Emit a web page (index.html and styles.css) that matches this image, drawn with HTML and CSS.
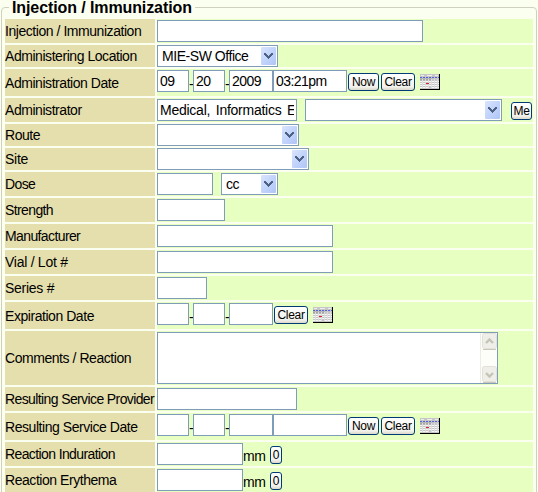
FILE: index.html
```html
<!DOCTYPE html>
<html lang="en">
<head>
<meta charset="utf-8">
<title>Injection / Immunization</title>
<link rel="stylesheet" href="styles.css">
</head>
<body>
<svg class="defs" aria-hidden="true">
  <defs>
    <linearGradient id="blue" x1="0" y1="0" x2="1" y2="1"><stop offset="0" stop-color="#d9e5fd"/><stop offset=".5" stop-color="#c2d4fb"/><stop offset="1" stop-color="#b0c5f6"/></linearGradient>
  </defs>
  <symbol id="drop" viewBox="0 0 15 18">
    <rect width="15" height="18" rx="1" fill="url(#blue)"/>
    <path d="M3 6h2v1h1v1h1v1h1V8h1V7h1V6h2v2h-1v1h-1v1H9v1H8v1H7v-1H6v-1H5V9H4V8H3z" fill="#4d6185"/>
  </symbol>
  <symbol id="cal" viewBox="0 0 20 16">
    <path d="M0 0h20v16H0z" fill="#c6c6c6"/>
    <path d="M1 1h3M7 1h5M15 1h3" stroke="#eee" transform="translate(0 .5)"/>
    <path d="M0 3.5h19" stroke="#5264d8" stroke-dasharray="2 1"/>
    <path d="M0 5.5h12" stroke="#a5a5a5" stroke-width="2"/>
    <path d="M0 7.5h19M0 9.5h19M0 11.5h19M0 13.5h8M12 13.5h7" stroke="#f7f7f7"/>
    <path d="M2.5 5v9M5.5 5v9M8.5 5v9M11.5 5v9M14.5 5v9M17.5 5v9" stroke="#dedede"/>
    <path d="M6 9h3v1H6z" fill="#e02020"/>
    <path d="M19 0h1v16H0v-1h19z" fill="#000"/>
  </symbol>
</svg>
<fieldset class="panel">
  <legend>Injection / Immunization</legend>
  <div class="rows">
    <div class="row"><label>Injection / Immunization</label><div class="val"><input class="w266"></div></div>
    <div class="row short"><label>Administering Location</label><div class="val"><span class="sel w121"><span>MIE-SW Office</span><svg><use href="#drop"/></svg></span></div></div>
    <div class="row date"><label>Administration Date</label><div class="val"><input class="w32" value="09"><i>-</i><input class="w32" value="20"><i>-</i><input class="w44" value="2009"><input class="w74" value="03:21pm"><button class="now">Now</button><button class="clear">Clear</button><svg class="cal"><use href="#cal"/></svg></div></div>
    <div class="row"><label>Administrator</label><div class="val"><input class="w140 name" value="Medical, Informatics Engineering"><span class="sel w197 gap"><svg><use href="#drop"/></svg></span><button class="me">Me</button></div></div>
    <div class="row short"><label>Route</label><div class="val"><span class="sel w142"><svg><use href="#drop"/></svg></span></div></div>
    <div class="row short"><label class="loose">Site</label><div class="val"><span class="sel w152"><svg><use href="#drop"/></svg></span></div></div>
    <div class="row"><label class="tight">Dose</label><div class="val"><input class="w56"><span class="sel w57 gap"><span>cc</span><svg><use href="#drop"/></svg></span></div></div>
    <div class="row"><label class="tight">Strength</label><div class="val"><input class="w68"></div></div>
    <div class="row"><label class="tight">Manufacturer</label><div class="val"><input class="w176"></div></div>
    <div class="row"><label class="loose">Vial / Lot #</label><div class="val"><input class="w176"></div></div>
    <div class="row"><label class="loose">Series #</label><div class="val"><input class="w50"></div></div>
    <div class="row date"><label>Expiration Date</label><div class="val"><input class="w32"><i>-</i><input class="w32"><i>-</i><input class="w44"><button class="clear first">Clear</button><svg class="cal"><use href="#cal"/></svg></div></div>
    <div class="row tall"><label>Comments / Reaction</label><div class="val"><div class="area"><div class="bar">
      <svg width="15" height="17"><rect x=".5" y=".5" width="14" height="15" rx="2" fill="#efeee8" stroke="#e2e1d8"/><path d="M1 16.5h13" stroke="#c9c8bb"/><path d="M4 10l3.5-3.5L11 10" fill="none" stroke="#c5c4b9" stroke-width="2.4"/></svg>
      <svg width="15" height="17"><rect x=".5" y=".5" width="14" height="15" rx="2" fill="#efeee8" stroke="#e2e1d8"/><path d="M1 16.5h13" stroke="#c9c8bb"/><path d="M4 7l3.5 3.5L11 7" fill="none" stroke="#c5c4b9" stroke-width="2.4"/></svg>
    </div></div></div></div>
    <div class="row"><label class="tight">Resulting Service Provider</label><div class="val"><input class="w140"></div></div>
    <div class="row date"><label>Resulting Service Date</label><div class="val"><input class="w32"><i>-</i><input class="w32"><i>-</i><input class="w44"><input class="w74"><button class="now">Now</button><button class="clear">Clear</button><svg class="cal"><use href="#cal"/></svg></div></div>
    <div class="row"><label class="tight">Reaction Induration</label><div class="val"><input class="w86"><b>mm</b><button class="zero">0</button></div></div>
    <div class="row"><label>Reaction Erythema</label><div class="val"><input class="w86"><b>mm</b><button class="zero">0</button></div></div>
  </div>
</fieldset>
</body>
</html>
```
FILE: styles.css
```css
* { box-sizing: border-box; }
html { overflow: hidden; }
body { margin: 0; height: 492px; overflow: hidden; background: #fbfff0; color: #000; font: 14px/16px "Liberation Sans", Arial, sans-serif; }
.defs { display: block; width: 0; height: 0; }
.panel { margin: 0 1px; padding: 0 3px; height: 510px; min-width: 0; border: 1px solid #d0d0bf; border-radius: 4px; }
legend { margin-left: 4px; padding: 0 3px; height: 14px; line-height: 16px; font-size: 16px; font-weight: bold; letter-spacing: -.1px; white-space: nowrap; }
.rows { display: flex; flex-direction: column; gap: 2px; padding-top: 5px; }
.row { display: grid; grid-template-columns: 150px 376px; column-gap: 2px; height: 24px; flex: none; }
.short { height: 22px; }
.date { height: 27px; }
.tall { height: 54px; }
label { display: flex; align-items: center; background: #e5dead; white-space: nowrap; letter-spacing: -.45px; }
.tight { letter-spacing: -.61px; }
.loose { letter-spacing: -.27px; }
.val { display: flex; align-items: flex-start; padding-top: 1px; background: #e8ffc2; }
.short .val { padding-top: 0; }
input, .sel { flex: none; height: 22px; margin: 0; border: 1px solid #7f9db9; border-radius: 0; background: #fff; color: #000; font: 14px/16px "Liberation Sans", Arial, sans-serif; letter-spacing: -.55px; }
input { padding: 0 2px; outline: 0; }
.name { letter-spacing: -.25px; word-spacing: 2px; }
.sel { display: flex; align-items: center; justify-content: flex-end; padding: 0 1px 0 4px; letter-spacing: -.45px; }
.sel span { flex: 1; white-space: nowrap; }
.sel svg { width: 15px; height: 18px; flex: none; }
.gap { margin-left: 8px; }
i { width: 4px; padding-top: 6px; font-style: normal; overflow: hidden; }
b { width: 22px; padding-top: 5px; font-weight: normal; letter-spacing: -.5px; }
button { flex: none; height: 18px; margin: 3px 0 0; padding: 0; border: 1px solid #003c74; border-radius: 3px; background: linear-gradient(#fff, #f2f1ec 80%, #dcd8cc); color: #000; font: 12px/15px "Liberation Sans", Arial, sans-serif; letter-spacing: -.3px; }
.now { width: 31px; margin-left: 1px; }
.clear { width: 34px; margin-left: 2px; }
.first { margin-left: 1px; }
.me { width: 21px; margin-left: 9px; }
.zero { width: 12px; margin-left: 5px; }
.cal { width: 20px; height: 16px; margin: 4px 0 0 5px; }
.area { display: flex; justify-content: flex-end; width: 341px; height: 52px; border: 1px solid #7f9db9; background: #fff; }
.bar { display: flex; flex-direction: column; justify-content: space-between; width: 17px; padding: 0 1px; background: #fdfdf9; border-left: 1px solid #eeede5; }
.w32 { width: 32px; } .w44 { width: 44px; } .w50 { width: 50px; } .w56 { width: 56px; } .w57 { width: 57px; }
.w68 { width: 68px; } .w74 { width: 74px; } .w86 { width: 86px; } .w121 { width: 121px; } .w140 { width: 140px; }
.w142 { width: 142px; } .w152 { width: 152px; } .w176 { width: 176px; } .w197 { width: 197px; } .w266 { width: 266px; }
```
